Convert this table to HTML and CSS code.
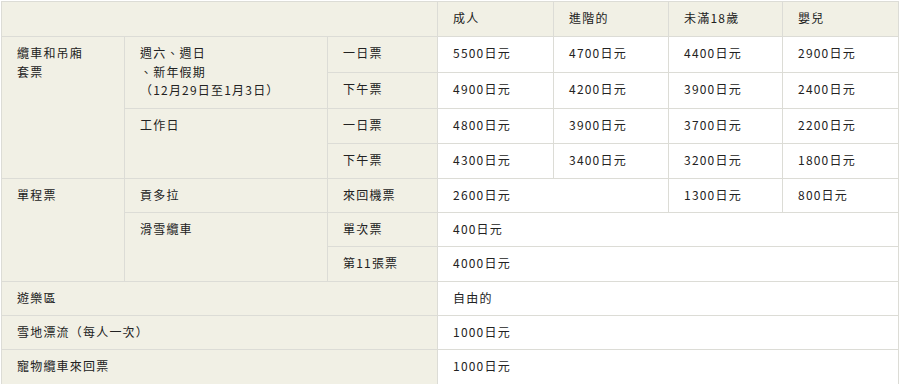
FILE: index.html
```html
<!DOCTYPE html>
<html lang="zh-Hant">
<head>
<meta charset="utf-8">
<title>票價</title>
<link rel="stylesheet" href="styles.css">
</head>
<body>
<div class="wrap">
<table class="price">
  <colgroup>
    <col class="c1"><col class="c2"><col class="c3"><col class="c4"><col class="c5"><col class="c6"><col class="c7">
  </colgroup>
  <thead>
    <tr class="tall">
      <th colspan="3" class="lab"></th>
      <th class="lab">成人</th>
      <th class="lab">進階的</th>
      <th class="lab">未滿18歲</th>
      <th class="lab">嬰兒</th>
    </tr>
  </thead>
  <tbody>
    <tr class="tall">
      <td rowspan="4" class="lab">纜車和吊廂<br>套票</td>
      <td rowspan="2" class="lab">週六、週日<br>、新年假期<br>（12月29日至1月3日）</td>
      <td class="lab">一日票</td>
      <td>5500日元</td><td>4700日元</td><td>4400日元</td><td>2900日元</td>
    </tr>
    <tr class="tall">
      <td class="lab">下午票</td>
      <td>4900日元</td><td>4200日元</td><td>3900日元</td><td>2400日元</td>
    </tr>
    <tr class="tall">
      <td rowspan="2" class="lab">工作日</td>
      <td class="lab">一日票</td>
      <td>4800日元</td><td>3900日元</td><td>3700日元</td><td>2200日元</td>
    </tr>
    <tr class="tall">
      <td class="lab">下午票</td>
      <td>4300日元</td><td>3400日元</td><td>3200日元</td><td>1800日元</td>
    </tr>
    <tr>
      <td rowspan="3" class="lab">單程票</td>
      <td class="lab">貢多拉</td>
      <td class="lab">來回機票</td>
      <td colspan="2">2600日元</td><td>1300日元</td><td>800日元</td>
    </tr>
    <tr>
      <td rowspan="2" class="lab">滑雪纜車</td>
      <td class="lab">單次票</td>
      <td colspan="4">400日元</td>
    </tr>
    <tr class="tall">
      <td class="lab">第11張票</td>
      <td colspan="4">4000日元</td>
    </tr>
    <tr>
      <td colspan="3" class="lab">遊樂區</td>
      <td colspan="4">自由的</td>
    </tr>
    <tr>
      <td colspan="3" class="lab">雪地漂流（每人一次）</td>
      <td colspan="4">1000日元</td>
    </tr>
    <tr class="tall">
      <td colspan="3" class="lab">寵物纜車來回票</td>
      <td colspan="4">1000日元</td>
    </tr>
  </tbody>
</table>
</div>
</body>
</html>
```

FILE: styles.css
```css
html, body {
  margin: 0;
  padding: 0;
  background: #ffffff;
}
.wrap {
  padding: 1px 0 0 1px;
}
.price {
  border-collapse: collapse;
  table-layout: fixed;
  width: 898px;
  font-family: "Noto Sans CJK TC", "Noto Sans", sans-serif;
  font-size: 12px;
  letter-spacing: 1.2px;
  color: #222222;
}
.c1 { width: 123px; }
.c2 { width: 203px; }
.c3 { width: 110px; }
.c4 { width: 116px; }
.c5 { width: 115px; }
.c6 { width: 114px; }
.c7 { width: 116px; }
.price th,
.price td {
  border: 1px solid #dcdcd6;
  padding: 7px 15px 7.5px 15px;
  line-height: 18.5px;
  height: 18.5px;
  text-align: left;
  vertical-align: top;
  font-weight: normal;
  background: #ffffff;
}
.price .tall > th,
.price .tall > td {
  padding-bottom: 8.5px;
}
.price .lab {
  background: #f1f0e5;
}
```
